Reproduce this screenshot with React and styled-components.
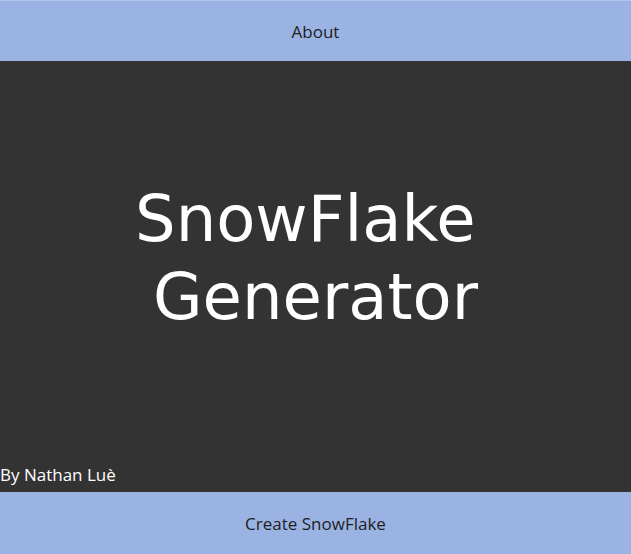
import React from 'react';
import styled, {createGlobalStyle} from 'styled-components';

const GlobalStyle = createGlobalStyle`
    html, body {
        margin: 0;
        padding: 0;
        height: 100%;
        background: #333333;
    }
    #root {
        height: 100%;
    }
`;

const Page = styled.div`
    display: flex;
    flex-direction: column;
    height: 554px;
    font-family: "Open Sans", "Noto Sans", sans-serif;
`;

const NavButton = styled.button`
    height: ${props => props.$height}px;
    flex: none;
    border: 0;
    border-top: ${props => (props.$top ? '1px solid #b4c6ec' : '0')};
    background: #9bb3e3;
    color: #1e1e24;
    font-family: inherit;
    font-size: 17px;
    cursor: pointer;
    :focus {
        outline: 0;
    }
`;

const Main = styled.main`
    flex: 1;
    display: flex;
    flex-direction: column;
    background: #333333;
    color: #ffffff;
`;

const Hero = styled.div`
    flex: 1;
    display: flex;
    align-items: center;
    justify-content: center;
    padding-bottom: 10px;

    h1 {
        margin: 0;
        font-family: "DejaVu Sans", Verdana, sans-serif;
        font-weight: normal;
        font-size: 64px;
        line-height: 78px;
        text-align: center;
    }
`;

const Credit = styled.p`
    margin: 0 0 6px;
    font-size: 17px;
    line-height: 22px;
`;

const App = () => (
    <Page>
        <GlobalStyle />
        <NavButton $height={61} $top>About</NavButton>
        <Main>
            <Hero>
                <h1>
                    SnowFlake{'\u00a0'}
                    <br />
                    Generator
                </h1>
            </Hero>
            <Credit>By Nathan Luè</Credit>
        </Main>
        <NavButton $height={62}>Create SnowFlake</NavButton>
    </Page>
);

export default App;
